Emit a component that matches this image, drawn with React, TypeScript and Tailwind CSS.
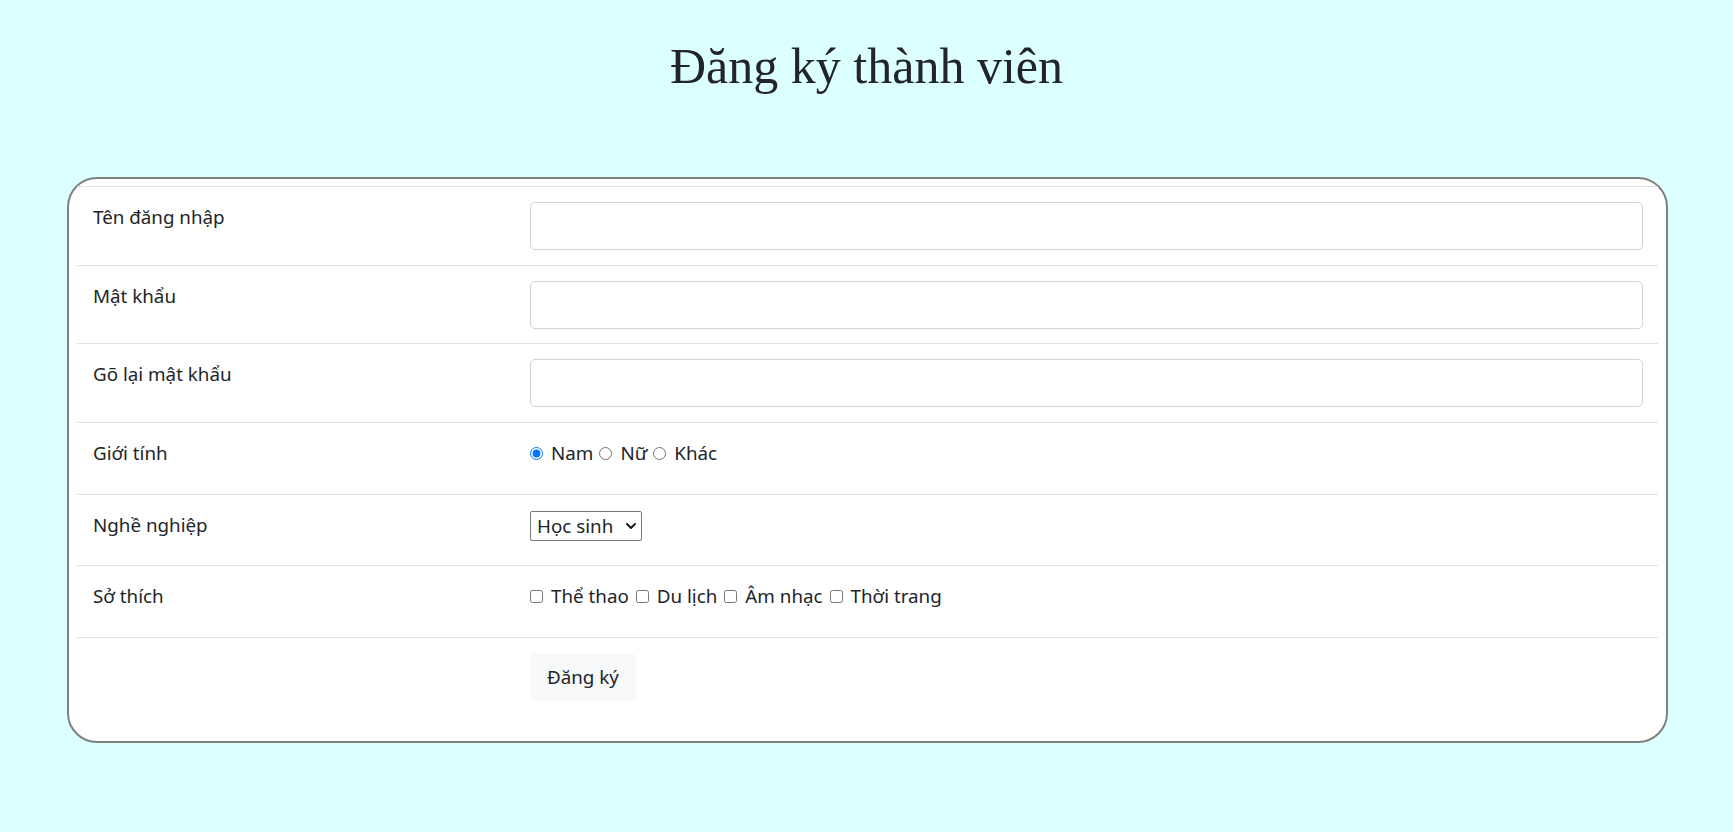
import React from 'react';

const labelCls = 'w-[437px] shrink-0 pl-4 pt-[15px]';
const valueCls = 'flex-1 pl-4 pr-[15px] pt-[15px]';

const TextRow: React.FC<{ label: string; type?: string; h: string }> = ({ label, type = 'text', h }) => (
  <div className={`flex border-t border-[#dee2e6] ${h}`}>
    <div className={labelCls}>{label}</div>
    <div className={valueCls}>
      <input
        type={type}
        className="block h-[48px] w-full rounded-[5px] border border-[#ced4da] bg-white px-4 text-[20px] outline-none"
      />
    </div>
  </div>
);

const App: React.FC = () => {
  return (
    <div
      className="min-h-screen bg-[#dcffff] pt-[36px] text-[18.8px] leading-[30px] text-[#212529]"
      style={{ fontFamily: '"Noto Sans", "Open Sans", sans-serif' }}
    >
      {/* Title */}
      <h1
        className="text-center text-[50px] font-normal leading-[60px]"
        style={{ fontFamily: '"Liberation Serif", "Times New Roman", serif' }}
      >
        Đăng ký thành viên
      </h1>

      {/* Form box */}
      <div className="mt-[81px] ml-[67px] mr-[65px] rounded-[30px] border-2 border-[#808080] bg-white px-2 pt-[7px] pb-[10px]">
        <div className="mb-4">
          <TextRow label="Tên đăng nhập" h="h-[79px]" />
          <TextRow label="Mật khẩu" type="password" h="h-[78px]" />
          <TextRow label="Gõ lại mật khẩu" type="password" h="h-[79px]" />

          {/* Gender */}
          <div className="flex h-[72px] border-t border-[#dee2e6]">
            <div className={labelCls}>Giới tính</div>
            <div className={valueCls}>
              <input type="radio" name="gt" defaultChecked className="mr-[8px] mb-[1px]" />
              <span>Nam</span>
              <input type="radio" name="gt" className="ml-[6px] mr-[8px] mb-[1px]" />
              <span>Nữ</span>
              <input type="radio" name="gt" className="ml-[6px] mr-[8px] mb-[1px]" />
              <span>Khác</span>
            </div>
          </div>

          {/* Job */}
          <div className="flex h-[71px] border-t border-[#dee2e6]">
            <div className={labelCls}>Nghề nghiệp</div>
            <div className={valueCls}>
              <div className="relative mt-[1px] w-[112px]">
                <select className="block h-[30px] w-full appearance-none rounded-[2px] border border-[#767676] bg-white pl-[6px] pr-6 leading-[28px] outline-none">
                  <option>Học sinh</option>
                  <option>Sinh viên</option>
                  <option>Giáo viên</option>
                  <option>Khác</option>
                </select>
                <svg
                  className="pointer-events-none absolute right-[6px] top-[12px]"
                  width="10"
                  height="6"
                  viewBox="0 0 10 6"
                  fill="none"
                >
                  <path d="M1 1l4 4 4-4" stroke="#111" strokeWidth="1.8" strokeLinecap="round" strokeLinejoin="round" />
                </svg>
              </div>
            </div>
          </div>

          {/* Hobbies */}
          <div className="flex h-[72px] border-t border-[#dee2e6]">
            <div className={labelCls}>Sở thích</div>
            <div className={valueCls}>
              {['Thể thao', 'Du lịch', 'Âm nhạc', 'Thời trang'].map((item, i) => (
                <React.Fragment key={item}>
                  <input type="checkbox" className={`${i > 0 ? 'ml-[7px]' : ''} mr-[8px] mb-[2px]`} />
                  <span>{item}</span>
                </React.Fragment>
              ))}
            </div>
          </div>

          {/* Submit */}
          <div className="flex h-[78px] border-t border-[#dee2e6]">
            <div className={labelCls}></div>
            <div className={valueCls}>
              <button className="h-[48px] rounded-[5px] border border-[#f8f9fa] bg-[#f8f9fa] px-4 text-[18.8px] text-[#212529]">
                Đăng ký
              </button>
            </div>
          </div>
        </div>
      </div>
    </div>
  );
};

export default App;
